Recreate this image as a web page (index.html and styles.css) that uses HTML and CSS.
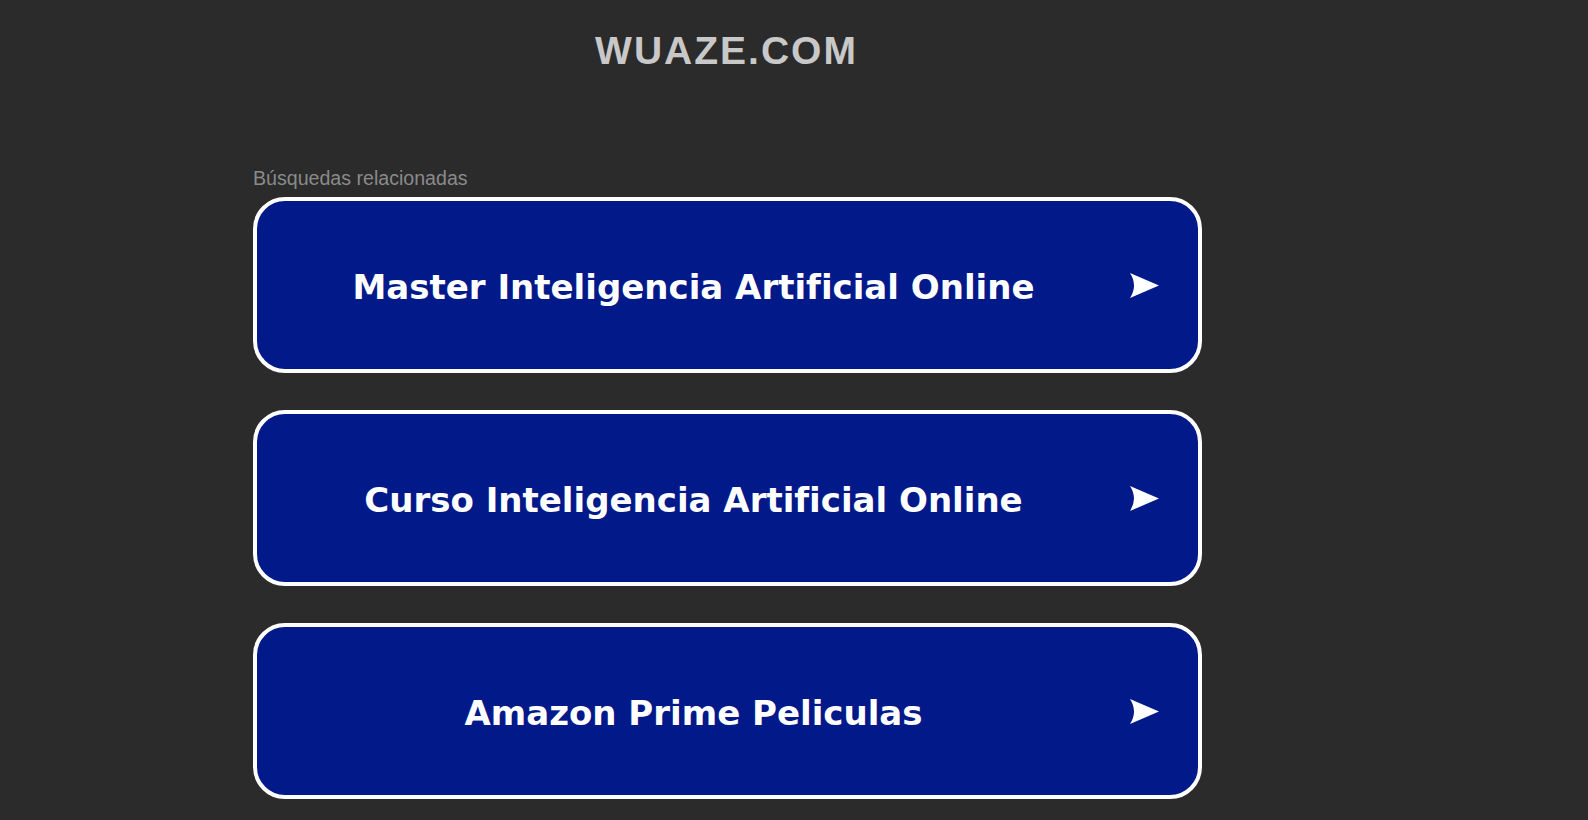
FILE: index.html
```html
<!DOCTYPE html>
<html lang="es">
<head>
<meta charset="utf-8">
<title>wuaze.com</title>
<link rel="stylesheet" href="styles.css">
</head>
<body>
<div class="page">
  <header class="header">
    <h1 class="domain">WUAZE.COM</h1>
  </header>
  <main class="related">
    <div class="related-title">Búsquedas relacionadas</div>
    <ul class="links">
      <li><a class="link" href="#"><span class="link-text">Master Inteligencia Artificial Online</span><svg class="arrow" viewBox="0 0 29 25" width="29" height="25"><path d="M0 0 L29 12.5 L0 25 Q8 12.5 0 0 Z" fill="#ffffff"/></svg></a></li>
      <li><a class="link" href="#"><span class="link-text">Curso Inteligencia Artificial Online</span><svg class="arrow" viewBox="0 0 29 25" width="29" height="25"><path d="M0 0 L29 12.5 L0 25 Q8 12.5 0 0 Z" fill="#ffffff"/></svg></a></li>
      <li><a class="link" href="#"><span class="link-text">Amazon Prime Peliculas</span><svg class="arrow" viewBox="0 0 29 25" width="29" height="25"><path d="M0 0 L29 12.5 L0 25 Q8 12.5 0 0 Z" fill="#ffffff"/></svg></a></li>
    </ul>
  </main>
</div>
</body>
</html>
```
FILE: styles.css
```css
html, body {
  margin: 0;
  padding: 0;
  background: #2b2b2b;
  height: 100%;
  overflow: hidden;
}
.page {
  width: 949px;
  margin-left: 253px;
}
.header {
  padding-top: 31px;
}
.domain {
  margin: 0;
  padding-right: 2px;
  font-family: "Liberation Sans", Arial, sans-serif;
  font-weight: 700;
  font-size: 39px;
  line-height: 39px;
  letter-spacing: 2px;
  color: #c8c8c8;
  text-align: center;
}
.related {
  margin-top: 98px;
}
.related-title {
  font-family: "Liberation Sans", Arial, sans-serif;
  font-size: 19.6px;
  line-height: 20px;
  color: #8a8a8a;
  margin-bottom: 9px;
}
.links {
  list-style: none;
  margin: 0;
  padding: 0;
  display: flex;
  flex-direction: column;
  gap: 37px;
}
.link {
  display: flex;
  align-items: center;
  box-sizing: border-box;
  height: 176px;
  border: 4px solid #ffffff;
  border-radius: 32px;
  background: #02198a;
  text-decoration: none;
}
.link-text {
  flex: 1;
  padding-top: 4px;
  text-align: center;
  font-family: "DejaVu Sans", Verdana, sans-serif;
  font-weight: 700;
  font-size: 34px;
  color: #ffffff;
}
.arrow {
  flex: none;
  margin-right: 39px;
}
```
